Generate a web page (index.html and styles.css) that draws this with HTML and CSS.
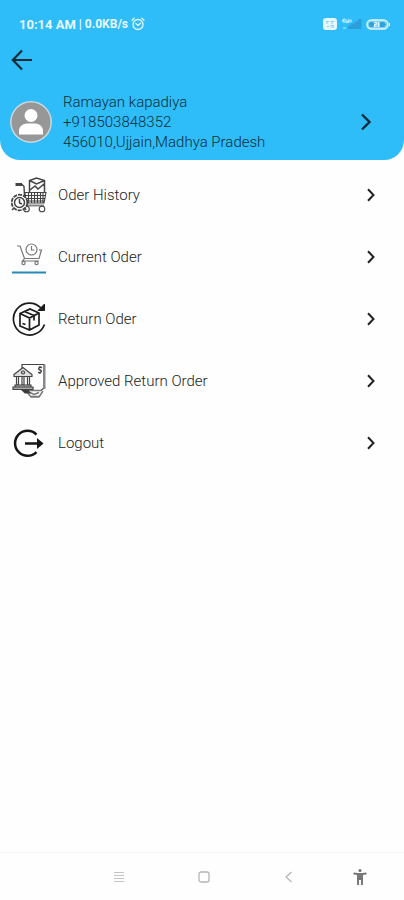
FILE: index.html
```html
<!DOCTYPE html>
<html lang="en">
<head>
  <meta charset="UTF-8" />
  <meta name="viewport" content="width=device-width, initial-scale=1.0"/>
  <title>My Account</title>
  <link rel="stylesheet" href="styles.css">
</head>
<body>
  <header class="header">
    <div class="status-bar">
      <div class="status-left">
        <span class="clock">10:14 AM</span>
        <span class="speed">| 0.0KB/s</span>
        <svg class="alarm" width="14" height="14" viewBox="0 0 14 14" fill="none" stroke="#e3f6ff" stroke-width="1.3" stroke-linecap="round">
          <circle cx="7" cy="7.5" r="5"/>
          <path d="M1 3.2 3.2 1.2M13 3.2 10.8 1.2M4.8 6.5 7 8.6 9.6 6.2"/>
        </svg>
      </div>
      <div class="status-right">
        <svg width="14" height="12" viewBox="0 0 14 12">
          <rect width="14" height="12" rx="3" fill="#e6f7ff"/>
          <path d="M3 3.5h3M7.5 3.5H11M3 5h2M8 5h2M4 8.5h2M7.5 7.5H11M7.5 9H11" stroke="#8fd0ef"/>
        </svg>
        <svg width="21" height="12" viewBox="0 0 21 12">
          <path d="M7 11V7.500h3V5.500h3.500V3.500H17V1h3.500v10z" fill="#2a9fda"/>
          <path d="M1 3.500 3 1v4M5 1v3.500h2V3H6M8 1v3.500M10 1.500v3" fill="none" stroke="#c4ecfd" stroke-width="1.2"/>
          <path d="M2 11V9h3v2z" fill="#79d1f7"/>
        </svg>
        <svg width="24" height="11" viewBox="0 0 24 11">
          <rect x="1" y="1" width="21" height="9" rx="4.500" fill="#7cd0f5" stroke="#def5ff" stroke-width="1.5"/>
          <rect x="3" y="3" width="5" height="5" rx="2" fill="#2ea2dc"/>
          <path d="M14 3h4l2 2.500L18 8h-4z" fill="#2ea2dc"/>
          <path d="M8.500 3.500h2v2h-2v2h2M12.500 3v5M23.500 4v3" fill="none" stroke="#e9f8ff"/>
        </svg>
      </div>
    </div>

    <button class="back" aria-label="Back">
      <svg width="22" height="22" viewBox="0 0 22 22" fill="none" stroke="#142a35" stroke-width="2.200">
        <path d="M21 11H2M11 1.500 1.800 11l9.200 9.500"/>
      </svg>
    </button>

    <a class="profile" href="#">
      <svg class="avatar" width="42" height="42" viewBox="0 0 42 42">
        <circle cx="21" cy="21" r="20.200" fill="#979797" stroke="#c9d8df" stroke-width="1.500"/>
        <circle cx="21" cy="14.500" r="6.500" fill="#fff"/>
        <path d="M9 33.500V30c0-5 4-7.500 9-7.500h6c5 0 9 2.500 9 7.500v3.500z" fill="#fff"/>
      </svg>
      <span class="details">
        <span>Ramayan kapadiya</span>
        <span>+918503848352</span>
        <span>456010,Ujjain,Madhya Pradesh</span>
      </span>
      <svg class="chevron" width="12" height="18" viewBox="0 0 12 18" fill="none" stroke="#102c39" stroke-width="2.400">
        <path d="M2 1.500 9.500 9 2 16.500"/>
      </svg>
    </a>
  </header>

  <main class="menu">
    <a class="item" href="#">
      <svg class="icon" width="36" height="36" viewBox="0 0 36 36" fill="none" stroke="#444" stroke-width="1.100">
        <!-- box -->
        <path d="M18.500 15V3.500l7-2.500 8 2.500V15M18.500 3.500l7 3.500 8-3.500M19 13l5-4 3 3 6-5" stroke-width="1.500"/>
        <!-- cart -->
        <path d="M5 7.500h6l2 2 1 19" stroke-width="1.400"/>
        <path d="M4.500 7.500H11" stroke-width="3"/>
        <path d="M14 15.500h21l-2 10.500H15zM14 18.500h20.500M14.500 21.500H34M15 24h18.500M17.500 15.500v10.500M20.500 15.500v10.500M23.500 15.500v10.500M26.500 15.500v10.500M29.500 15.500v10.500M32 15.500v10.500"/>
        <path d="M14 28.500h19" stroke="#888" stroke-width="2"/>
        <circle cx="15.500" cy="32" r="2.800"/>
        <circle cx="31" cy="32" r="2.800"/>
        <!-- clock -->
        <circle cx="8.500" cy="25.500" r="7.800" fill="#fff" stroke-width="1.800" stroke-dasharray="4 1"/>
        <circle cx="8.500" cy="25.500" r="5" stroke-width="1.500"/>
        <path d="M8.500 22v4l2.500 1M3 31l-2 2M14 31l1 2" stroke-width="1.500"/>
      </svg>
      <span class="label">Oder History</span>
      <svg class="chevron" width="10" height="14" viewBox="0 0 10 14" fill="none" stroke="#222" stroke-width="2"><path d="M2 1.200 7.500 7 2 12.800"/></svg>
    </a>
    <a class="item" href="#">
      <svg class="icon" width="36" height="36" viewBox="0 0 36 36" fill="none" stroke="#777" stroke-width="1.200">
        <path d="M6 7h3l4.500 12.500H28L30.500 11H28M13.500 19.500l-2 2.500H28"/>
        <circle cx="20.500" cy="10.500" r="5.500" fill="#fff"/>
        <path d="M20.500 7v4h3"/>
        <circle cx="12.500" cy="24" r="1.600"/>
        <circle cx="25.500" cy="24" r="1.600"/>
        <path d="M1 33.500h34" stroke="#2588b8" stroke-width="2"/>
      </svg>
      <span class="label">Current Oder</span>
      <svg class="chevron" width="10" height="14" viewBox="0 0 10 14" fill="none" stroke="#222" stroke-width="2"><path d="M2 1.200 7.500 7 2 12.800"/></svg>
    </a>
    <a class="item" href="#">
      <svg class="icon" width="36" height="36" viewBox="0 0 36 36" fill="none" stroke="#1c1c1c" stroke-width="1.700">
        <path d="M33.500 23.500A16 16 0 1 1 30 7"/>
        <path d="M33.500 3v6.500H27z" fill="#1c1c1c" stroke-width="1"/>
        <path d="M9 12.500 19 8l9 4v12l-9.500 5L9 25zM9 12.500l9.500 4.500 9.500-5M18.500 17v12M13.500 10.500l9.500 4v5M19 8l-5 2.500M11.500 22.500l3 1"/>
      </svg>
      <span class="label">Return Oder</span>
      <svg class="chevron" width="10" height="14" viewBox="0 0 10 14" fill="none" stroke="#222" stroke-width="2"><path d="M2 1.200 7.500 7 2 12.800"/></svg>
    </a>
    <a class="item" href="#">
      <svg class="icon" width="36" height="36" viewBox="0 0 36 36" fill="none" stroke="#444" stroke-width="1.200">
        <!-- paper -->
        <path d="M11 6V1.500h22V25l-3 2.500H12"/>
        <path d="M33.500 1.500V26" stroke="#888" stroke-width="2"/>
        <path d="M31 4.500c-4-1-4 2-2 2.500s2 3-2 2.500M29 3v2M29 9v2" stroke-width="1.400"/>
        <path d="M12 27.500h18M16 29l4 5h8l4-6M19 29.500l4 2 5-2M20 33.500h8" stroke="#777" stroke-width="1.500"/>
        <path d="M11 27h6l2 3h-5z" fill="#333"/>
        <!-- bank -->
        <path d="M3 11.500 12 4.500l9 7v2H3z" fill="#ddd"/>
        <circle cx="12" cy="9.500" r="1.500"/>
        <path d="M5.500 14v8h2v-8M11 14v8h2v-8M16.500 14v8h2v-8" fill="#fff"/>
        <path d="M4 22h16v2H4zM2 24h20v2.500H2z" fill="#aaa"/>
      </svg>
      <span class="label">Approved Return Order</span>
      <svg class="chevron" width="10" height="14" viewBox="0 0 10 14" fill="none" stroke="#222" stroke-width="2"><path d="M2 1.200 7.500 7 2 12.800"/></svg>
    </a>
    <a class="item" href="#">
      <svg class="icon" width="36" height="36" viewBox="0 0 36 36" fill="none" stroke="#151515" stroke-width="2.500">
        <path d="M25.500 9.500A12.500 12.500 0 1 0 25.500 27"/>
        <path d="M14 18.500h14"/>
        <path d="M26 13v11l6.500-5.500z" fill="#151515" stroke="none"/>
      </svg>
      <span class="label">Logout</span>
      <svg class="chevron" width="10" height="14" viewBox="0 0 10 14" fill="none" stroke="#222" stroke-width="2"><path d="M2 1.200 7.500 7 2 12.800"/></svg>
    </a>
  </main>

  <nav class="nav-bar">
    <button aria-label="Recent apps">
      <svg width="12" height="12" viewBox="0 0 12 12" stroke="#c4c4c4" stroke-width="1"><path d="M1 1.500h10M1 4.500h10M1 7.500h10M1 10.500h10"/></svg>
    </button>
    <button aria-label="Home">
      <svg width="12" height="12" viewBox="0 0 12 12" fill="none" stroke="#b4b4b4" stroke-width="1.300"><rect x="1" y="1" width="10" height="10" rx="2"/></svg>
    </button>
    <button aria-label="Back">
      <svg width="12" height="12" viewBox="0 0 12 12" fill="none" stroke="#b4b4b4" stroke-width="1.200"><path d="M8.500 1 3 6l5.500 5"/></svg>
    </button>
    <button aria-label="Accessibility">
      <svg width="14" height="18" viewBox="0 0 14 18" fill="#777"><circle cx="7" cy="2.500" r="1.600"/><path d="M.5 4.500 5 5h4l4.500-.5v2L10 7v10H8v-5H6v5H4V7L.5 6.500z"/></svg>
    </button>
  </nav>
</body>
</html>
```
FILE: styles.css
```css
* {
  box-sizing: border-box;
}
body {
  margin: 0;
  min-height: 100vh;
  display: flex;
  flex-direction: column;
  font-family: Roboto, sans-serif;
  background-color: #fefefe;
  color: #222;
}
a {
  color: inherit;
  text-decoration: none;
}
button {
  display: flex;
  align-items: center;
  justify-content: center;
  padding: 0;
  border: none;
  background: none;
  cursor: pointer;
}
svg {
  display: block;
  flex-shrink: 0;
}
.header {
  background-color: #2fbdf9;
  border-radius: 0 0 20px 20px;
  padding-bottom: 8px;
}
.status-bar {
  display: flex;
  justify-content: space-between;
  align-items: center;
  height: 48px;
  padding: 0 14px 0 19px;
  color: #e9f8ff;
  font-weight: 700;
}
.status-left,
.status-right {
  display: flex;
  align-items: center;
  gap: 4px;
}
.status-left {
  gap: 3px;
}
.clock {
  font-size: 13px;
}
.speed {
  font-size: 12px;
}
.back {
  width: 44px;
  height: 24px;
}
.profile {
  display: flex;
  align-items: center;
  gap: 11px;
  margin-top: 20px;
  padding: 0 32px 0 10px;
  color: #0c2d3a;
}
.details {
  flex: 1;
  display: flex;
  flex-direction: column;
  font-size: 15px;
  font-weight: 300;
  line-height: 20px;
}
.menu {
  flex: 1;
  padding-top: 4px;
}
.item {
  display: flex;
  align-items: center;
  gap: 11px;
  height: 62px;
  padding: 0 28px 0 11px;
}
.label {
  flex: 1;
  font-size: 15px;
  font-weight: 300;
  line-height: 20px;
}
.nav-bar {
  display: grid;
  grid-template-columns: 3fr 3fr 3fr 2fr;
  height: 48px;
  padding: 0 16px 0 76px;
  border-top: 1px solid #f3f3f3;
}
```
